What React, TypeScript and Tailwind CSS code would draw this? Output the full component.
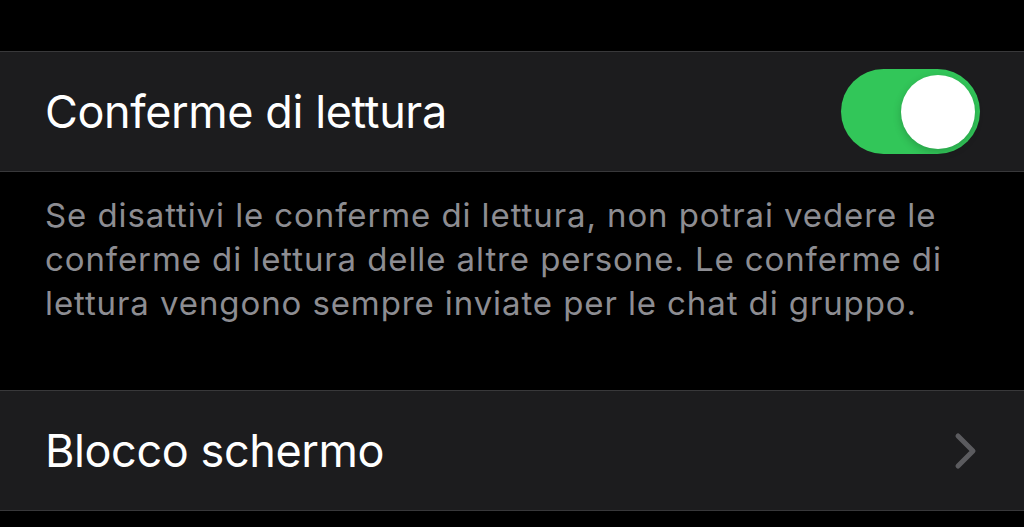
const font = { fontFamily: "Inter, 'Noto Sans', sans-serif" };

export default function App() {
  return (
    <div className="w-[1024px] h-[527px] bg-black overflow-hidden" style={font}>
      <div className="h-[51px]" />
      <div className="h-[121px] bg-[#1c1c1e] border-y border-[#38383a] flex items-center justify-between pl-[45px] pr-[44px]">
        <span className="text-white text-[45px] tracking-[-0.4px]">Conferme di lettura</span>
        <div className="w-[139px] h-[85px] rounded-full bg-[#32c659] flex items-center justify-end pr-[5px]">
          <div className="w-[74px] h-[74px] rounded-full bg-white shadow-[0_3px_8px_rgba(0,0,0,0.2)]" />
        </div>
      </div>
      <p className="px-[45px] pt-[21px] text-[33px] leading-[44px] text-[#8d8d92] tracking-[0.9px] whitespace-nowrap">
        Se disattivi le conferme di lettura, non potrai vedere le
        <br />
        conferme di lettura delle altre persone. Le conferme di
        <br />
        lettura vengono sempre inviate per le chat di gruppo.
      </p>
      <div className="h-[65px]" />
      <div className="h-[121px] bg-[#1c1c1e] border-y border-[#38383a] flex items-center justify-between pl-[45px] pr-[44px]">
        <span className="text-white text-[45px] tracking-[-0.4px]">Blocco schermo</span>
        <svg width="28" height="40" viewBox="0 0 28 40" className="mr-[2px]">
          <polyline
            points="8,5 23,20 8,35"
            fill="none"
            stroke="#5b5b5f"
            strokeWidth="5"
            strokeLinecap="round"
            strokeLinejoin="round"
          />
        </svg>
      </div>
    </div>
  );
}
